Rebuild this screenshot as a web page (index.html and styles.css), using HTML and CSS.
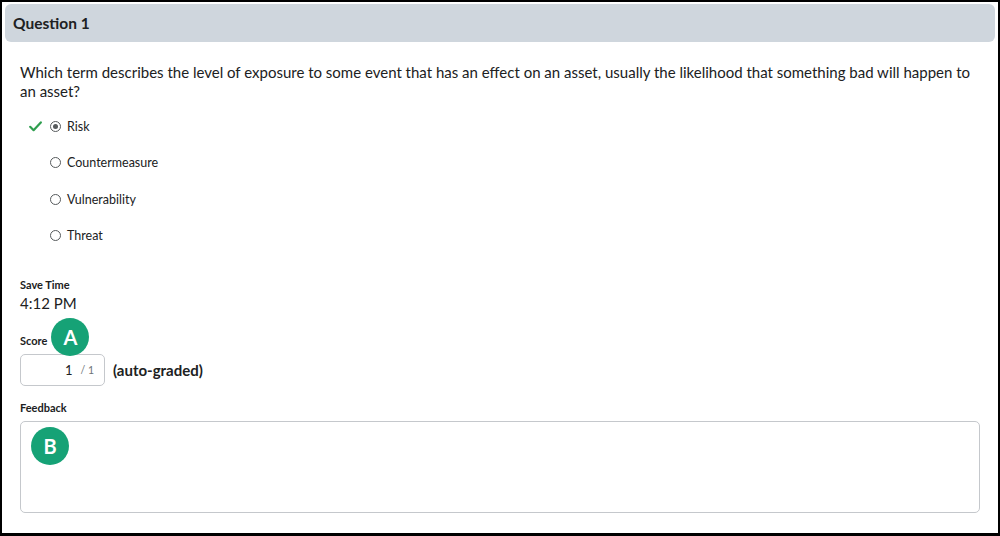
FILE: index.html
```html
<!DOCTYPE html>
<html lang="en">
<head>
<meta charset="utf-8">
<title>Question 1</title>
<link rel="stylesheet" href="styles.css">
</head>
<body>
<div class="frame">
  <div class="q-header">Question 1</div>
  <div class="content">
    <p class="q-text">Which term describes the level of exposure to some event that has an effect on an asset, usually the likelihood that something bad will happen to an asset?</p>
    <ul class="options">
      <li class="option">
        <span class="mark">
          <svg width="13" height="11" viewBox="0 0 13 11"><path d="M1.2 5.8 L4.6 9.2 L11.8 1.4" fill="none" stroke="#2f9e4f" stroke-width="2.2" stroke-linecap="round" stroke-linejoin="round"/></svg>
        </span>
        <span class="radio checked"></span>
        <span class="opt-label">Risk</span>
      </li>
      <li class="option">
        <span class="mark"></span>
        <span class="radio"></span>
        <span class="opt-label">Countermeasure</span>
      </li>
      <li class="option">
        <span class="mark"></span>
        <span class="radio"></span>
        <span class="opt-label">Vulnerability</span>
      </li>
      <li class="option">
        <span class="mark"></span>
        <span class="radio"></span>
        <span class="opt-label">Threat</span>
      </li>
    </ul>
    <div class="field save">
      <div class="label">Save Time</div>
      <div class="value">4:12 PM</div>
    </div>
    <div class="field score">
      <div class="label-row"><span class="label">Score</span><span class="badge badge-a">A</span></div>
      <div class="score-row">
        <div class="score-box"><span class="score-num">1</span><span class="score-out">/ 1</span></div>
        <span class="auto">(auto-graded)</span>
      </div>
    </div>
    <div class="field feedback">
      <div class="label">Feedback</div>
      <div class="feedback-box"><span class="badge badge-b">B</span></div>
    </div>
  </div>
</div>
</body>
</html>
```
FILE: styles.css
```css
html, body {
  margin: 0;
  padding: 0;
  background: #ffffff;
}
body {
  font-family: Lato, "Open Sans", "Liberation Sans", sans-serif;
  color: #202122;
}
.frame {
  box-sizing: border-box;
  width: 1000px;
  height: 536px;
  border: 2px solid #000;
  border-bottom-width: 3px;
  padding: 2px 3px 0 3px;
  overflow: hidden;
}
.q-header {
  box-sizing: border-box;
  height: 38px;
  background: #cfd6dd;
  border-radius: 6px;
  padding: 0 0 0 8px;
  font-size: 15.5px;
  font-weight: 700;
  line-height: 38px;
  color: #202122;
}
.content {
  padding: 0 13px 0 15px;
}
.q-text {
  margin: 21px 0 0 0;
  font-size: 15px;
  line-height: 19px;
  padding-right: 4px;
}
.options {
  list-style: none;
  margin: 17px 0 0 0;
  padding: 0;
  display: flex;
  flex-direction: column;
  gap: 20.5px;
}
.option {
  display: flex;
  align-items: center;
  height: 16px;
  font-size: 12.5px;
}
.mark {
  width: 14px;
  height: 12px;
  margin-left: 9px;
  margin-right: 7px;
  display: flex;
  align-items: center;
}
.radio {
  box-sizing: border-box;
  width: 11px;
  height: 11px;
  border: 1px solid #565a5c;
  border-radius: 50%;
  margin-right: 6px;
  position: relative;
  flex: none;
}
.radio.checked::after {
  content: "";
  position: absolute;
  left: 2px;
  top: 2px;
  width: 5px;
  height: 5px;
  border-radius: 50%;
  background: #565a5c;
}
.opt-label {
  color: #202122;
}
.field .label {
  font-size: 11px;
  font-weight: 700;
  line-height: 13px;
}
.save {
  margin-top: 34px;
}
.save .value {
  font-size: 15px;
  line-height: 18px;
  margin-top: 3px;
}
.score {
  margin-top: 19px;
}
.label-row {
  display: flex;
  align-items: center;
  height: 20px;
}
.badge {
  display: flex;
  align-items: center;
  justify-content: center;
  width: 38px;
  height: 38px;
  border-radius: 50%;
  background: #16a276;
  color: #fff;
  font-weight: 700;
  font-size: 20px;
  flex: none;
}
.badge-a {
  margin-left: 4px;
  margin-top: -8px;
  position: relative;
}
.score-row {
  display: flex;
  align-items: center;
  margin-top: 3px;
}
.score-box {
  box-sizing: border-box;
  width: 85px;
  height: 32px;
  border: 1px solid #c5c8cc;
  border-radius: 5px;
  display: flex;
  align-items: center;
  justify-content: flex-end;
  padding-right: 10px;
  gap: 8px;
  background: #fff;
}
.score-num {
  font-size: 13px;
}
.score-out {
  font-size: 10.5px;
  color: #6e7376;
}
.auto {
  margin-left: 8px;
  font-size: 15px;
  font-weight: 700;
}
.feedback {
  margin-top: 15px;
}
.feedback .label {
  line-height: 14px;
}
.feedback-box {
  box-sizing: border-box;
  margin-top: 6px;
  width: 960px;
  height: 92px;
  border: 1px solid #c5c8cc;
  border-radius: 5px;
  padding: 5px 0 0 10px;
}
```
